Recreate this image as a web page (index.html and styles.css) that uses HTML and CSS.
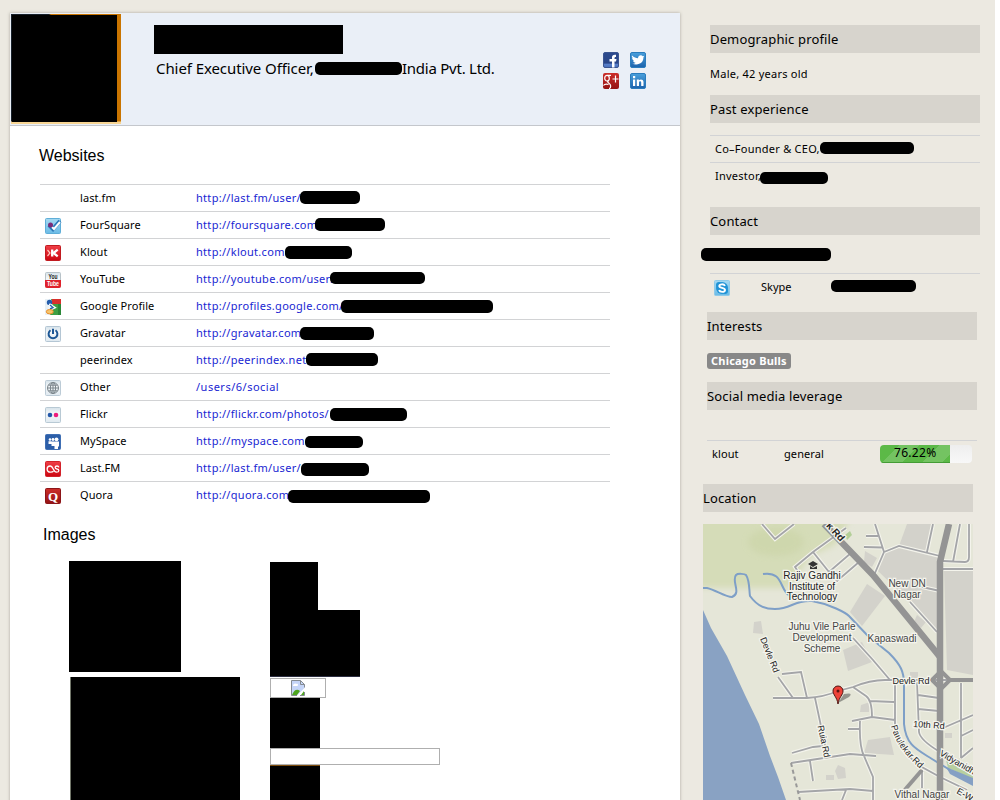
FILE: index.html
```html
<!DOCTYPE html>
<html lang="en">
<head>
<meta charset="utf-8">
<title>Profile</title>
<link rel="stylesheet" href="styles.css">
</head>
<body>
<svg class="defs" aria-hidden="true">
  <defs>
    <linearGradient id="blue" x1="0" y1="0" x2="0" y2="1"><stop offset="0" stop-color="#4aa0dc"/><stop offset="1" stop-color="#1c62ac"/></linearGradient>
    <linearGradient id="navy" x1="0" y1="0" x2="0" y2="1"><stop offset="0" stop-color="#2c4a8e"/><stop offset=".72" stop-color="#2a4587"/><stop offset=".76" stop-color="#5a82cc"/><stop offset="1" stop-color="#4a6fbb"/></linearGradient>
    <linearGradient id="red" x1="0" y1="0" x2="0" y2="1"><stop offset="0" stop-color="#cc2e2a"/><stop offset="1" stop-color="#941313"/></linearGradient>
    <linearGradient id="bright" x1="0" y1="0" x2="0" y2="1"><stop offset="0" stop-color="#f04048"/><stop offset="1" stop-color="#cc0510"/></linearGradient>
    <linearGradient id="pale" x1="0" y1="0" x2="0" y2="1"><stop offset="0" stop-color="#d5e2ea"/><stop offset=".4" stop-color="#f4f7f9"/><stop offset="1" stop-color="#dfe9f0"/></linearGradient>
    <linearGradient id="sky" x1="0" y1="0" x2="0" y2="1"><stop offset="0" stop-color="#a5d9f2"/><stop offset="1" stop-color="#6bbbe6"/></linearGradient>
  </defs>
</svg>
<div class="page">
  <main class="card">
    <header class="head">
      <div class="photo"><div class="photo-mask"></div></div>
      <div class="who">
        <div class="name-mask"></div>
        <div class="role"><span class="officer">Chief Executive Officer,</span><i class="bar role-bar"></i><span class="india">India Pvt. Ltd.</span></div>
      </div>
      <div class="social">
        <svg viewBox="0 0 16 16"><rect x=".5" y=".5" width="15" height="15" rx="1.5" fill="url(#navy)" stroke="#3b5591"/><path d="M9 15.500V9.500H6.500V7H9V5.500C9 3.200 10.300 2.500 13 2.800V5C11.700 4.900 11.500 5.200 11.500 7H13.500L13 9.500H11.500V15.500Z" fill="#fff"/></svg>
        <svg viewBox="0 0 16 16"><rect x=".5" y=".5" width="15" height="15" rx="1.500" fill="url(#blue)" stroke="#2a7cbd"/><path d="M2 3.500C4 5.500 6 6.200 8 6.200C8 3.200 11.500 2.300 12.800 4.300L14.200 4L13.400 5.600C13.500 10.500 9 14 2.200 11.800C4 11.800 5 11.300 5.500 10.700C4 10.400 3.300 9.600 3.100 8.700L4 8.600C2.700 7.800 2.100 6.900 2.100 5.900L3 6.200C2 5.300 1.700 4.500 2 3.500Z" fill="#fff"/></svg>
        <svg viewBox="0 0 16 16"><rect width="16" height="16" rx="2" fill="url(#red)"/><g fill="none" stroke="#fff" stroke-width="1.200"><ellipse cx="4" cy="5.200" rx="2.300" ry="2.800"/><path d="M4.500 2.300H8M5.500 7.800C2.500 9.300 7.700 10 7.700 13C7.700 14.500 7 15.500 6 15.500M.5 12.500C1.500 11 3.500 11 5.500 11.500M12.500 2.500V9.500M9.500 6H15.500"/></g></svg>
        <svg viewBox="0 0 16 16"><rect x=".5" y=".5" width="15" height="15" rx="1.500" fill="url(#blue)" stroke="#2a7cbd"/><path d="M3 6.500H5.200V13H3ZM3 3H5.200V5.200H3ZM6.800 6.500H8.900V7.400C10 5.900 13.500 6 13.500 9V13H11.200V9.500C11.200 7.700 9 7.700 9 9.500V13H6.800Z" fill="#fff"/></svg>
      </div>
    </header>

    <h2 class="title">Websites</h2>
    <ul class="sites">
      <li><span class="ico"></span><span class="site">last.fm</span><a>http://last.fm/user/</a><i class="bar" style="left:260px;top:6px;width:60px"></i></li>
      <li><span class="ico"><svg viewBox="0 0 16 16"><rect x=".5" y=".5" width="15" height="15" rx="1" fill="url(#sky)" stroke="#5faed8"/><path d="M4 7L8 11L15 3" fill="none" stroke="#2a78b8" stroke-width="4"/><path d="M7 9L9 11L15 4" fill="none" stroke="#fff" stroke-width="2"/><circle cx="5.500" cy="7" r="2.500" fill="#7c2c78"/></svg></span><span class="site">FourSquare</span><a>http://foursquare.com</a><i class="bar" style="left:275px;top:6px;width:70px"></i></li>
      <li><span class="ico"><svg viewBox="0 0 16 16"><rect x=".5" y=".5" width="15" height="15" rx="1" fill="url(#bright)" stroke="#c11b20"/><path d="M2.500 5L5 8L2.500 11" fill="none" stroke="#ffc9bd" stroke-width="1.200"/><path d="M7.200 4.500V11.500M12.700 4.700L8.500 8L12.700 11.300" fill="none" stroke="#fff" stroke-width="2.300"/></svg></span><span class="site">Klout</span><a>http://klout.com</a><i class="bar" style="left:245px;top:7px;width:67px"></i></li>
      <li><span class="ico"><svg viewBox="0 0 16 16"><rect x=".5" y=".5" width="15" height="15" rx="1" fill="url(#pale)" stroke="#b8c2c8"/><path d="M0 8H16V14Q16 16 14 16H2Q0 16 0 14Z" fill="#df222b"/><text x="8" y="7" class="tube" fill="#222" textLength="9" lengthAdjust="spacingAndGlyphs">You</text><text x="8" y="14.300" class="tube" fill="#fff" textLength="12" lengthAdjust="spacingAndGlyphs">Tube</text></svg></span><span class="site">YouTube</span><a>http://youtube.com/user/</a><i class="bar short" style="left:290px;top:6px;width:95px"></i></li>
      <li><span class="ico"><svg viewBox="0 0 16 16"><rect width="16" height="16" rx="1" fill="#3e9f43"/><path d="M0 0H6L8 8L5 16H0Z" fill="#e8f0f5"/><path d="M7 0H16V5H7Z" fill="#d9302c"/><path d="M13 5H16V16H13Z" fill="#2b8737"/><circle cx="4.500" cy="3.500" r="2.700" fill="#245cab"/><path d="M4 5.500L8.500 8.500L4 10.500" fill="none" stroke="#fff" stroke-width="3.200"/><path d="M5 6L8 8.500L5 10" fill="none" stroke="#2765aa" stroke-width="1.400"/><ellipse cx="4.800" cy="12.700" rx="3.500" ry="2.200" fill="#f5c66e" stroke="#eb8c28"/></svg></span><span class="site">Google Profile</span><a>http://profiles.google.com/</a><i class="bar" style="left:301px;top:7px;width:152px"></i></li>
      <li><span class="ico"><svg viewBox="0 0 16 16"><rect x=".5" y=".5" width="15" height="15" rx="1" fill="url(#pale)" stroke="#b4c6d4"/><path d="M5.500 4.300A4.400 4.400 0 1 0 10.500 4.300M8 2.800V8" fill="none" stroke="#1c5695" stroke-width="2"/></svg></span><span class="site">Gravatar</span><a>http://gravatar.com</a><i class="bar" style="left:260px;top:7px;width:74px"></i></li>
      <li><span class="ico"></span><span class="site">peerindex</span><a>http://peerindex.net</a><i class="bar" style="left:266px;top:6px;width:72px"></i></li>
      <li><span class="ico"><svg viewBox="0 0 16 16"><rect x=".5" y=".5" width="15" height="15" rx="1" fill="url(#pale)" stroke="#bccbd6"/><g fill="none" stroke="#7b858b"><circle cx="8" cy="8" r="5.500"/><ellipse cx="8" cy="8" rx="2.600" ry="5.500"/><path d="M8 2.500V13.500M2.500 8H13.500M3.500 5.200H12.500M3.500 10.800H12.500"/></g></svg></span><span class="site">Other</span><a class="loose">/users/6/social</a></li>
      <li><span class="ico"><svg viewBox="0 0 16 16"><rect x=".5" y=".5" width="15" height="15" rx="1" fill="url(#pale)" stroke="#b8c9d4"/><circle cx="5" cy="8" r="2.300" fill="#2458a9"/><circle cx="11" cy="8" r="2.300" fill="#ee1b7c"/></svg></span><span class="site">Flickr</span><a>http://flickr.com/photos/</a><i class="bar" style="left:290px;top:7px;width:77px"></i></li>
      <li><span class="ico"><svg viewBox="0 0 16 16"><rect x=".5" y=".5" width="15" height="15" rx="1" fill="#2c5ea8" stroke="#3f6fb4"/><g fill="#fff"><circle cx="5" cy="5.500" r="1.300"/><circle cx="8" cy="5.500" r="1.400"/><circle cx="11.500" cy="5.300" r="1.900"/><path d="M3.500 7.300H6.500V10H3.500ZM6.500 7.500H9V12H6.500ZM9 7.500H14V12.500H13V15H9.500V12H9Z"/></g></svg></span><span class="site">MySpace</span><a>http://myspace.com</a><i class="bar short" style="left:265px;top:8px;width:58px"></i></li>
      <li><span class="ico"><svg viewBox="0 0 16 16"><rect x=".5" y=".5" width="15" height="15" rx="1" fill="url(#bright)" stroke="#d2222a"/><path d="M8.500 10.300C7.500 11.300 6.500 11.200 5.300 11.200C1 11.200 1.200 5 5.300 5C8.500 5 8 11.200 11.500 11.200C14.500 11.200 14.500 8.300 12 8C9.300 7.600 9.800 5 12 5C13.200 5 13.700 5.500 13.900 6.300" fill="none" stroke="#fff" stroke-width="1.300"/></svg></span><span class="site">Last.FM</span><a>http://last.fm/user/</a><i class="bar" style="left:261px;top:8px;width:68px"></i></li>
      <li><span class="ico"><svg viewBox="0 0 16 16"><rect x=".5" y=".5" width="15" height="15" rx="1" fill="url(#red)" stroke="#8c1518"/><text x="8" y="12.500" class="q">Q</text></svg></span><span class="site">Quora</span><a>http://quora.com</a><i class="bar" style="left:248px;top:8px;width:142px"></i></li>
    </ul>

    <h2 class="title images-title">Images</h2>
    <div class="images">
      <div class="col-a"><div class="im a1"></div><div class="im a2"></div></div>
      <div class="col-b">
        <div class="im b1"></div><div class="im b2"></div>
        <div class="frame broken"><svg viewBox="0 0 14 16"><path d="M.5.500H9.500L13.500 4.500V8L6 15.500H.5Z" fill="#c5d5f8"/><path d="M2 6C2 4 4 3 5 4C7 3 8 6 6 6Z" fill="#fff"/><path d="M1 15C3 10 6 8.500 9 11L6 15Z" fill="#4ea51e"/><path d="M13.500 7.500V4.500H9.500V.5H.5V15.500H6M9.500.5L13.500 4.500M13.500 12V15.500H9" fill="none" stroke="#858b91"/><path d="M10 15L13 11V15Z" fill="#4ea51e"/></svg></div>
        <div class="im b3"></div><div class="frame wide"></div><div class="im b4"></div>
      </div>
    </div>
  </main>

  <aside class="side">
    <h3>Demographic profile</h3>
    <p class="demo">Male, 42 years old</p>
    <h3>Past experience</h3>
    <ul class="jobs">
      <li>Co–Founder &amp; CEO,<i class="bar short" style="left:110px;top:6px;width:94px"></i></li>
      <li>Investor,<i class="bar short" style="left:50px;top:9px;width:68px"></i></li>
    </ul>
    <h3>Contact</h3>
    <div class="phone"><i class="bar"></i></div>
    <div class="skype">
      <svg viewBox="0 0 16 16"><rect x=".5" y=".5" width="15" height="15" rx="1" fill="url(#sky)" stroke="#8fcbea"/><circle cx="8" cy="8" r="6" fill="#2093d6"/><circle cx="5" cy="5" r="3" fill="#2093d6"/><circle cx="11" cy="11" r="3" fill="#2093d6"/><path d="M11 5.800C10 3.800 5.300 3.800 5.300 6C5.300 8.500 11 7.200 11 10C11 12.500 6 12.500 5 10.200" fill="none" stroke="#fff" stroke-width="1.900"/></svg>
      <span>Skype</span><i class="bar short"></i>
    </div>
    <section class="shift">
      <h3>Interests</h3>
      <span class="tag">Chicago Bulls</span>
      <h3>Social media leverage</h3>
      <div class="score"><span class="net">klout</span><span class="kind">general</span><div class="meter"><div class="fill" style="width:76.22%"></div><span>76.22%</span></div></div>
    </section>
    <section class="place">
      <h3>Location</h3>
      <svg class="map" viewBox="703 524 270 276">
        <defs><filter id="soft" x="-20%" y="-20%" width="140%" height="140%"><feGaussianBlur stdDeviation="3"/></filter></defs>
        <rect x="703" y="524" width="270" height="276" fill="#e5e6d8"/>
        <path d="M695 515H852L835 545L810 556L790 588H695Z" fill="#d5dcb8" filter="url(#soft)"/>
        <ellipse cx="776" cy="542" rx="28" ry="14" fill="#ccd5a9" opacity=".7" filter="url(#soft)"/>
        <g fill="#d3d2cb">
          <path d="M907 524H934L928 552L899 546Z"/><path d="M884 552L899 546L940 558V634L905 597L878 571Z"/><path d="M944 570H973V675L947 670Z"/><path d="M867 584L885 596L862 626L850 612Z"/><path d="M865 551L877 558L872 567L864 562Z"/><path d="M868 740L890 737L894 755L864 753Z"/>
          <path d="M754 622L761 621L763 634L753 633Z"/><path d="M838 765L845 768L846 778L838 779L835 771Z"/><path d="M826 775H834V780H826Z"/><path d="M910 672H918V680H910Z"/><path d="M861 705L870 702L869 712L860 712Z"/><path d="M945 733H952V738H945Z"/><path d="M843 650L862 642L872 662L848 671Z"/><path d="M917 615L926 622L921 628L914 622Z"/>
        </g>
        <path d="M703 610L711 628L727 656L745 695L759 724L770 756L778 777L786 800H703Z" fill="#89a2c3"/>
        <path d="M845 535L850 531L852 535L847 540Z" fill="#b3cf98"/>
        <path d="M946 760L973 771V779L948 768Z" fill="#b8cf9e"/><path d="M946 767L973 778V786L950 774Z" fill="#85a0c4"/>
        <g fill="none" stroke="#f4f4ec" stroke-width="4">
          <path id="roads" d="M762 524L775 539L794 524M846 528L813 552L795 567L801 576M813 552L829 572L851 553M829 572L837 581L859 562M875 524L884 552L875 573M866 536H878M864 547L882 547.500M884 552L899 546L940 556M933 524L927 552M960 524L953 562M969 524V557Q969 562 965 562L943 561M943 569H973M922 587L940 591M910 602L937 632M853 638L873 660L890 680M778 677L793 698M782 674L801 672L807 698M773 698L807 698Q824 697 838 691L853 687Q870 680 885 680H973M815 698L825 745M792 753L813 747L823 746M791 763L850 754L876 756M810 761L813 781M798 792L850 789L873 791M853 687L866 696Q872 700 872 717M870 701L894 702M852 721L872 717L895 720M895 680V733Q899 750 920 766L940 777L967 790M860 721Q859 746 864 756L873 777V800M848 729H859M917 682L919 732Q920 740 940 752M918 695L939 698M918 709L939 711M961 683V758M943 728L973 715M961 736L973 730M961 758L973 748M922 770V788M842 800L846 790"/>
        </g>
        <use href="#roads" fill="none" stroke="#a4a5a8" stroke-width="1.800"/>
        <path d="M703 588H707C716 590 725 597 732 597C742 593 731 581 736 575C738 573 745 574 746 575C750 581 749 591 750 596C758 607 766 609 775 609C792 609 793 600 812 601C830 604 846 613 849 616L868 636L889 653C901 665 904 672 904 684V724C906 745 916 749 932 759L950 770M763 574C784 571 779 590 790 596" fill="none" stroke="#7e9fc7" stroke-width="2"/>
        <g fill="none" stroke="#949494"><path d="M824 524L873 575L936 652L940 657" stroke-width="6.500"/><path d="M949 524L940 562V800" stroke-width="6.500"/><path d="M932 680L941 671L950 680L941 689ZM950 680H973" stroke-width="4"/><path d="M922 770L903 792" stroke-width="4"/></g>
        <path d="M791 763L800 800" fill="none" stroke="#999" stroke-width="2" stroke-dasharray="4 3"/>
        <g class="place-name">
          <text x="812" y="579">Rajiv Gandhi</text><text x="812" y="590">Institute of</text><text x="812" y="600">Technology</text>
          <g class="dim"><text x="907" y="587">New DN</text><text x="907" y="598">Nagar</text><text x="822" y="630">Juhu Vile Parle</text><text x="822" y="641">Development</text><text x="822" y="652">Scheme</text><text x="892" y="642">Kapaswadi</text></g>
          <text x="922" y="798" class="dim">Vithal Nagar</text>
        </g>
        <g class="road-name">
          <text x="911" y="684">Devle Rd</text><text x="929" y="728" transform="rotate(4 929 724)">10th Rd</text>
          <text transform="translate(767 656) rotate(68)">Devle Rd</text><text transform="translate(821 742) rotate(78)">Ruia Rd</text>
          <text transform="translate(833 534) rotate(48)" class="strong">k Rd</text>
          <path id="p1" d="M891 726Q897 750 924 772" fill="none" stroke="none"/><text class="on-path"><textPath href="#p1">Parulekar Rd</textPath></text>
          <text transform="translate(939 755) rotate(30)" class="start">Vidyanidhi</text><text transform="translate(956 793) rotate(29)" class="start">E-W</text>
        </g>
        <path d="M808 564L813 561L818 564L813 567ZM810 566L813 568L817 566V569H810Z" fill="#333"/>
        <path d="M838 703L849 697Q854 692 844 694Z" fill="#333" opacity=".45"/>
        <path d="M838 704C837 697 833 695 833 691A5 5 0 0 1 843 691C843 695 839 697 838 704Z" fill="#ee4238" stroke="#4c1511"/><circle cx="838" cy="691" r="1.500" fill="#5b120e"/>
      </svg>
    </section>
  </aside>
</div>
</body>
</html>
```
FILE: styles.css
```css
* { box-sizing: border-box; }
body { margin: 0; background: #fff; color: #000; font: 11px/14px "Noto Sans", "Open Sans", sans-serif; }
h2, h3, p, ul { margin: 0; padding: 0; list-style: none; }
svg { display: block; }
.defs { position: absolute; width: 0; height: 0; }
.page { width: 995px; height: 800px; background: #ece9e1; display: flex; overflow: hidden; padding: 13px 0 0 10px; }
.card { width: 670px; height: 810px; flex: none; background: #fff; box-shadow: 0 0 3px #aaa79f; }
.bar { position: absolute; display: block; height: 13px; background: #000; border-radius: 5px; }
.bar.short { height: 12px; }

.head { height: 113px; display: flex; background: #eaeff7; border-bottom: 1px solid #c4c7cc; }
.photo { width: 110px; height: 110px; margin: 1px 0 0 1px; padding: 1px 0 0 1px; flex: none; background: linear-gradient(#0000 107px, #f7d594 108px), linear-gradient(90deg, #17202a 38px, #c97400 40px); }
.photo-mask { width: 105px; height: 107px; background: #000; }
.who { width: 449px; padding: 12px 0 0 33px; }
.name-mask { width: 189px; height: 29px; background: #000; }
.role { display: flex; padding: 4px 0 0 2px; font-size: 15px; line-height: 20px; white-space: nowrap; }
.officer { width: 159px; letter-spacing: -.08px; }
.role-bar { position: static; width: 87px; margin-top: 4px; }
.india { letter-spacing: -.25px; }
.social { display: grid; grid-template-columns: 16px 16px; grid-auto-rows: 16px; gap: 5px 11px; padding: 39px 0 0 33px; }

.title { font: 16px/20px "Liberation Sans", Arial, sans-serif; padding-left: 29px; margin-top: 20px; }
.sites { width: 570px; margin: 18px 0 0 30px; }
.sites li { position: relative; height: 27px; display: flex; border-top: 1px solid #d2d3d5; line-height: 26px; white-space: nowrap; }
.ico { width: 40px; padding: 6px 0 0 5px; }
.ico svg, .skype svg { width: 16px; height: 16px; overflow: visible; }
.site { width: 116px; letter-spacing: .08px; }
.sites a { color: #2026d2; letter-spacing: .3px; }
.sites .loose { letter-spacing: .5px; }
.tube { font: bold 6.5px "Liberation Sans", sans-serif; text-anchor: middle; }
.q { font: bold 13px "Liberation Serif", serif; text-anchor: middle; fill: #fff; }

.images-title { padding-left: 33px; margin-top: 17px; }
.images { display: flex; padding: 16px 0 0 59px; }
.col-a { width: 201px; }
.im { background: #000; }
.a1 { width: 112px; height: 111px; }
.a2 { width: 170px; height: 130px; margin: 5px 0 0 1px; border-left: 1px solid #72776a; }
.col-b { padding-top: 1px; }
.b1 { width: 48px; height: 48px; }
.b2 { width: 90px; height: 67px; border-bottom: 1px solid #2b2d40; }
.frame { border: 1px solid #afafaf; }
.broken { width: 56px; height: 20px; margin-top: 1px; padding: 1px 0 0 20px; }
.broken svg { width: 14px; height: 16px; }
.b3 { width: 50px; height: 50px; }
.wide { width: 170px; height: 17px; }
.b4 { width: 50px; height: 50px; border-top: 1px solid #7d4c0c; }

.side { width: 270px; margin-left: 30px; padding-top: 12px; flex: none; }
.side h3 { height: 28px; background: #d7d4cd; font-size: 13px; font-weight: 400; line-height: 28px; letter-spacing: .15px; }
.demo { padding: 14px 0; letter-spacing: .25px; }
.jobs { margin: 12px 0 17px; }
.jobs li { position: relative; height: 27px; padding-left: 5px; border-top: 1px solid #d2d3d5; line-height: 26px; letter-spacing: .25px; }
.jobs li + li { height: 28px; }
.phone { height: 39px; position: relative; border-bottom: 1px solid #d2d3d5; }
.phone .bar { left: -9px; top: 13px; width: 130px; }
.skype { position: relative; display: flex; height: 38px; padding: 6px 0 0 4px; }
.skype span { margin-left: 31px; line-height: 14px; }
.skype .bar { left: 121px; top: 6px; width: 85px; }
.shift { margin-left: -3px; }
.shift h3, .place h3 { width: 270px; }
.tag { display: block; width: 84px; height: 16px; margin: 13px 0; padding-left: 4px; border-radius: 3px; background: #888; color: #fff; font-weight: 700; line-height: 16px; letter-spacing: .22px; white-space: nowrap; }
.score { display: flex; width: 270px; height: 44px; margin-top: 30px; padding-left: 5px; border-top: 1px solid #d2d3d5; line-height: 26px; letter-spacing: .1px; }
.net { width: 72px; }
.kind { width: 96px; }
.meter { position: relative; width: 92px; height: 18px; margin-top: 4px; border-radius: 4px; overflow: hidden; background: linear-gradient(#eee, #f8f8f8); }
.fill { height: 18px; background: repeating-linear-gradient(135deg, #fff0 0 14px, #ffffff26 14px 28px), #5cb947; border-bottom: 1px solid #449c35; }
.meter span { position: absolute; left: 14px; top: -1px; font-size: 12px; line-height: 18px; letter-spacing: .3px; }
.place { margin-left: -7px; }
.map { width: 270px; height: 276px; margin-top: 12px; }
.place-name text, .road-name text { text-anchor: middle; paint-order: stroke; stroke: #f4f4ed; stroke-width: 2.5px; fill: #222; }
.place-name { font: 10px "Liberation Sans", sans-serif; }
.place-name .dim text, .place-name .dim { fill: #444; }
.road-name { font: 9px "Liberation Sans", sans-serif; }
.road-name .start, .road-name .on-path { text-anchor: start; }
.road-name .strong { font-weight: 700; font-size: 10px; }
```
